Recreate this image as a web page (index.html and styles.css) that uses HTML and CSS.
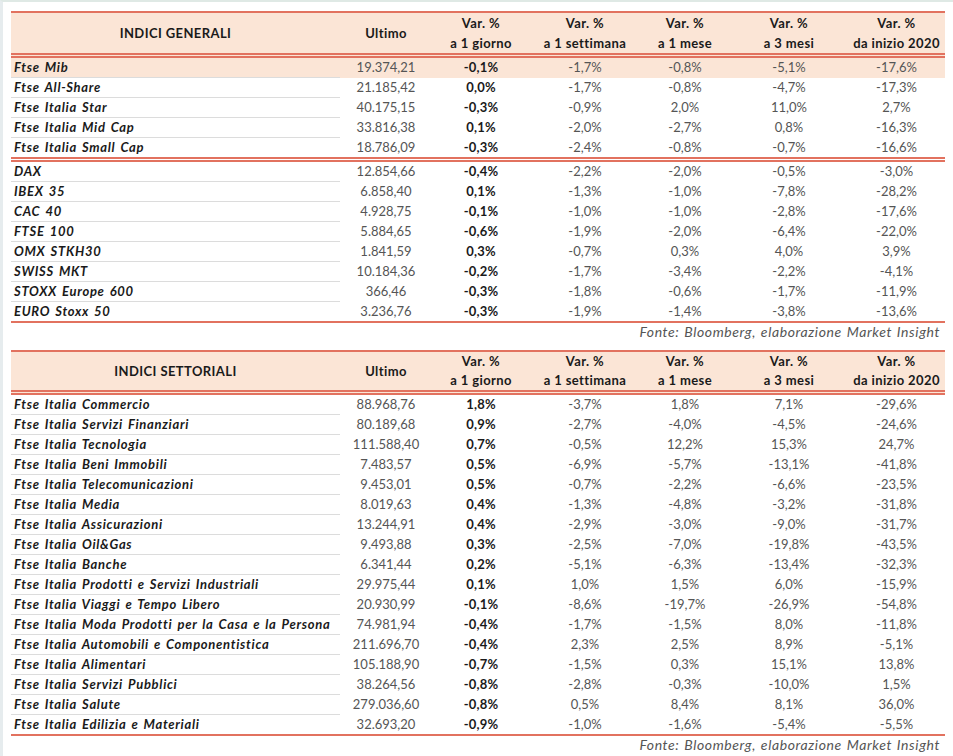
FILE: index.html
```html
<!DOCTYPE html>
<html lang="it">
<head>
<meta charset="utf-8">
<title>Indici</title>
<link rel="stylesheet" href="styles.css">
</head>
<body>
<div class="page">
  <table class="tbl">
    <colgroup>
      <col class="c-name"><col class="c-ult"><col class="c-g"><col class="c-s"><col class="c-m"><col class="c-3"><col class="c-y">
    </colgroup>
    <thead>
      <tr>
        <th class="name">INDICI GENERALI</th>
        <th>Ultimo</th>
        <th>Var. %<br>a 1 giorno</th>
        <th>Var. %<br>a 1 settimana</th>
        <th>Var. %<br>a 1 mese</th>
        <th>Var. %<br>a 3 mesi</th>
        <th>Var. %<br>da inizio 2020</th>
      </tr>
    </thead>
    <tbody class="grp">
      <tr class="hl"><td class="name">Ftse Mib</td><td>19.374,21</td><td class="day">-0,1%</td><td>-1,7%</td><td>-0,8%</td><td>-5,1%</td><td>-17,6%</td></tr>
      <tr><td class="name">Ftse All-Share</td><td>21.185,42</td><td class="day">0,0%</td><td>-1,7%</td><td>-0,8%</td><td>-4,7%</td><td>-17,3%</td></tr>
      <tr><td class="name">Ftse Italia Star</td><td>40.175,15</td><td class="day">-0,3%</td><td>-0,9%</td><td>2,0%</td><td>11,0%</td><td>2,7%</td></tr>
      <tr><td class="name">Ftse Italia Mid Cap</td><td>33.816,38</td><td class="day">0,1%</td><td>-2,0%</td><td>-2,7%</td><td>0,8%</td><td>-16,3%</td></tr>
      <tr class="last"><td class="name">Ftse Italia Small Cap</td><td>18.786,09</td><td class="day">-0,3%</td><td>-2,4%</td><td>-0,8%</td><td>-0,7%</td><td>-16,6%</td></tr>
    </tbody>
    <tbody class="grp-end">
      <tr><td class="name">DAX</td><td>12.854,66</td><td class="day">-0,4%</td><td>-2,2%</td><td>-2,0%</td><td>-0,5%</td><td>-3,0%</td></tr>
      <tr><td class="name">IBEX 35</td><td>6.858,40</td><td class="day">0,1%</td><td>-1,3%</td><td>-1,0%</td><td>-7,8%</td><td>-28,2%</td></tr>
      <tr><td class="name">CAC 40</td><td>4.928,75</td><td class="day">-0,1%</td><td>-1,0%</td><td>-1,0%</td><td>-2,8%</td><td>-17,6%</td></tr>
      <tr><td class="name">FTSE 100</td><td>5.884,65</td><td class="day">-0,6%</td><td>-1,9%</td><td>-2,0%</td><td>-6,4%</td><td>-22,0%</td></tr>
      <tr><td class="name">OMX STKH30</td><td>1.841,59</td><td class="day">0,3%</td><td>-0,7%</td><td>0,3%</td><td>4,0%</td><td>3,9%</td></tr>
      <tr><td class="name">SWISS MKT</td><td>10.184,36</td><td class="day">-0,2%</td><td>-1,7%</td><td>-3,4%</td><td>-2,2%</td><td>-4,1%</td></tr>
      <tr><td class="name">STOXX Europe 600</td><td>366,46</td><td class="day">-0,3%</td><td>-1,8%</td><td>-0,6%</td><td>-1,7%</td><td>-11,9%</td></tr>
      <tr class="last"><td class="name">EURO Stoxx 50</td><td>3.236,76</td><td class="day">-0,3%</td><td>-1,9%</td><td>-1,4%</td><td>-3,8%</td><td>-13,6%</td></tr>
    </tbody>
  </table>
  <p class="src">Fonte: Bloomberg, elaborazione Market Insight</p>

  <table class="tbl second">
    <colgroup>
      <col class="c-name"><col class="c-ult"><col class="c-g"><col class="c-s"><col class="c-m"><col class="c-3"><col class="c-y">
    </colgroup>
    <thead>
      <tr>
        <th class="name">INDICI SETTORIALI</th>
        <th>Ultimo</th>
        <th>Var. %<br>a 1 giorno</th>
        <th>Var. %<br>a 1 settimana</th>
        <th>Var. %<br>a 1 mese</th>
        <th>Var. %<br>a 3 mesi</th>
        <th>Var. %<br>da inizio 2020</th>
      </tr>
    </thead>
    <tbody class="grp-end">
      <tr><td class="name">Ftse Italia Commercio</td><td>88.968,76</td><td class="day">1,8%</td><td>-3,7%</td><td>1,8%</td><td>7,1%</td><td>-29,6%</td></tr>
      <tr><td class="name">Ftse Italia Servizi Finanziari</td><td>80.189,68</td><td class="day">0,9%</td><td>-2,7%</td><td>-4,0%</td><td>-4,5%</td><td>-24,6%</td></tr>
      <tr><td class="name">Ftse Italia Tecnologia</td><td>111.588,40</td><td class="day">0,7%</td><td>-0,5%</td><td>12,2%</td><td>15,3%</td><td>24,7%</td></tr>
      <tr><td class="name">Ftse Italia Beni Immobili</td><td>7.483,57</td><td class="day">0,5%</td><td>-6,9%</td><td>-5,7%</td><td>-13,1%</td><td>-41,8%</td></tr>
      <tr><td class="name">Ftse Italia Telecomunicazioni</td><td>9.453,01</td><td class="day">0,5%</td><td>-0,7%</td><td>-2,2%</td><td>-6,6%</td><td>-23,5%</td></tr>
      <tr><td class="name">Ftse Italia Media</td><td>8.019,63</td><td class="day">0,4%</td><td>-1,3%</td><td>-4,8%</td><td>-3,2%</td><td>-31,8%</td></tr>
      <tr><td class="name">Ftse Italia Assicurazioni</td><td>13.244,91</td><td class="day">0,4%</td><td>-2,9%</td><td>-3,0%</td><td>-9,0%</td><td>-31,7%</td></tr>
      <tr><td class="name">Ftse Italia Oil&amp;Gas</td><td>9.493,88</td><td class="day">0,3%</td><td>-2,5%</td><td>-7,0%</td><td>-19,8%</td><td>-43,5%</td></tr>
      <tr><td class="name">Ftse Italia Banche</td><td>6.341,44</td><td class="day">0,2%</td><td>-5,1%</td><td>-6,3%</td><td>-13,4%</td><td>-32,3%</td></tr>
      <tr><td class="name">Ftse Italia Prodotti e Servizi Industriali</td><td>29.975,44</td><td class="day">0,1%</td><td>1,0%</td><td>1,5%</td><td>6,0%</td><td>-15,9%</td></tr>
      <tr><td class="name">Ftse Italia Viaggi e Tempo Libero</td><td>20.930,99</td><td class="day">-0,1%</td><td>-8,6%</td><td>-19,7%</td><td>-26,9%</td><td>-54,8%</td></tr>
      <tr><td class="name">Ftse Italia Moda Prodotti per la Casa e la Persona</td><td>74.981,94</td><td class="day">-0,4%</td><td>-1,7%</td><td>-1,5%</td><td>8,0%</td><td>-11,8%</td></tr>
      <tr><td class="name">Ftse Italia Automobili e Componentistica</td><td>211.696,70</td><td class="day">-0,4%</td><td>2,3%</td><td>2,5%</td><td>8,9%</td><td>-5,1%</td></tr>
      <tr><td class="name">Ftse Italia Alimentari</td><td>105.188,90</td><td class="day">-0,7%</td><td>-1,5%</td><td>0,3%</td><td>15,1%</td><td>13,8%</td></tr>
      <tr><td class="name">Ftse Italia Servizi Pubblici</td><td>38.264,56</td><td class="day">-0,8%</td><td>-2,8%</td><td>-0,3%</td><td>-10,0%</td><td>1,5%</td></tr>
      <tr><td class="name">Ftse Italia Salute</td><td>279.036,60</td><td class="day">-0,8%</td><td>0,5%</td><td>8,4%</td><td>8,1%</td><td>36,0%</td></tr>
      <tr class="last"><td class="name">Ftse Italia Edilizia e Materiali</td><td>32.693,20</td><td class="day">-0,9%</td><td>-1,0%</td><td>-1,6%</td><td>-5,4%</td><td>-5,5%</td></tr>
    </tbody>
  </table>
  <p class="src">Fonte: Bloomberg, elaborazione Market Insight</p>
</div>
</body>
</html>
```

FILE: styles.css
```css
html, body {
  margin: 0;
  padding: 0;
  background: #ffffff;
}

body {
  font-family: "Lato", "DejaVu Sans", sans-serif;
  color: #1a1a1a;
  border-top: 2px solid #dfe9e5;
  border-left: 3px solid #e6ecee;
  min-height: 754px;
  box-sizing: border-box;
}

.page {
  padding: 9px 0 0 8px;
  width: 934px;
}

.tbl {
  width: 934px;
  border-collapse: collapse;
  table-layout: fixed;
  font-size: 13px;
  border-top: 2px solid #e2725f;
}

.c-name { width: 329px; }
.c-ult { width: 92px; }
.c-g { width: 98px; }
.c-s { width: 110px; }
.c-m { width: 90px; }
.c-3 { width: 118px; }
.c-y { width: 97px; }

.tbl thead th {
  background: #fbe5d6;
  font-weight: 700;
  font-size: 13px;
  line-height: 20px;
  height: 40px;
  padding: 0;
  text-align: center;
  vertical-align: middle;
  color: #1a1a1a;
  letter-spacing: 0.4px;
  border-bottom: 5px double #e2725f;
}

.tbl.second thead th {
  line-height: 19px;
  height: 38px;
}

.tbl td {
  height: 19px;
  padding: 0;
  line-height: 19px;
  text-align: center;
  color: #555555;
  white-space: nowrap;
}

.tbl td.name {
  text-align: left;
  padding-left: 3px;
  font-weight: 700;
  font-style: italic;
  color: #1a1a1a;
  letter-spacing: 0.7px;
  word-spacing: 1.5px;
  border-bottom: 1px solid #dcdcdc;
}

.tbl tr.last td.name {
  border-bottom: none;
}

.tbl td.day {
  font-weight: 700;
  color: #1a1a1a;
  letter-spacing: 0.2px;
}

.tbl tr.hl td {
  background: #fbe5d6;
}

.tbl tbody.grp {
  border-bottom: 5px double #e2725f;
}

.tbl tbody.grp-end {
  border-bottom: 2px solid #e2725f;
}

.src {
  margin: 0;
  height: 27px;
  line-height: 17px;
  text-align: right;
  padding-right: 5px;
  font-size: 14px;
  font-style: italic;
  color: #555555;
  letter-spacing: 0.6px;
  word-spacing: 1px;
}
```
